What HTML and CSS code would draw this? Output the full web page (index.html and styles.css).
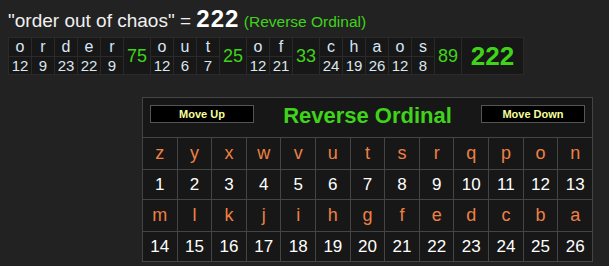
FILE: index.html
```html
<!DOCTYPE html>
<html lang="en">
<head>
  <meta charset="UTF-8">
  <title>Gematria - Reverse Ordinal</title>
  <link rel="stylesheet" href="styles.css">
</head>
<body>
  <div class="phrase">
    <span class="quote">"order out of chaos" = </span><span class="total">222</span>
    <span class="cipher-name">(Reverse Ordinal)</span>
  </div>

  <table class="breakdown">
    <tr>
      <td class="ch">o</td><td class="ch">r</td><td class="ch">d</td><td class="ch">e</td><td class="ch">r</td>
      <td class="word-sum" rowspan="2">75</td>
      <td class="ch">o</td><td class="ch">u</td><td class="ch">t</td>
      <td class="word-sum" rowspan="2">25</td>
      <td class="ch">o</td><td class="ch">f</td>
      <td class="word-sum" rowspan="2">33</td>
      <td class="ch">c</td><td class="ch">h</td><td class="ch">a</td><td class="ch">o</td><td class="ch">s</td>
      <td class="word-sum" rowspan="2">89</td>
      <td class="grand-sum" rowspan="2">222</td>
    </tr>
    <tr>
      <td class="val">12</td><td class="val">9</td><td class="val">23</td><td class="val">22</td><td class="val">9</td>
      <td class="val">12</td><td class="val">6</td><td class="val">7</td>
      <td class="val">12</td><td class="val">21</td>
      <td class="val">24</td><td class="val">19</td><td class="val">26</td><td class="val">12</td><td class="val">8</td>
    </tr>
  </table>

  <table class="chart">
    <tr>
      <th colspan="13">
        <div class="chart-head">
          <button class="move-btn">Move Up</button>
          <span class="chart-title">Reverse Ordinal</span>
          <button class="move-btn">Move Down</button>
        </div>
      </th>
    </tr>
    <tr class="letters">
      <td>z</td><td>y</td><td>x</td><td>w</td><td>v</td><td>u</td><td>t</td><td>s</td><td>r</td><td>q</td><td>p</td><td>o</td><td>n</td>
    </tr>
    <tr class="numbers">
      <td>1</td><td>2</td><td>3</td><td>4</td><td>5</td><td>6</td><td>7</td><td>8</td><td>9</td><td>10</td><td>11</td><td>12</td><td>13</td>
    </tr>
    <tr class="letters">
      <td>m</td><td>l</td><td>k</td><td>j</td><td>i</td><td>h</td><td>g</td><td>f</td><td>e</td><td>d</td><td>c</td><td>b</td><td>a</td>
    </tr>
    <tr class="numbers">
      <td>14</td><td>15</td><td>16</td><td>17</td><td>18</td><td>19</td><td>20</td><td>21</td><td>22</td><td>23</td><td>24</td><td>25</td><td>26</td>
    </tr>
  </table>
</body>
</html>
```

FILE: styles.css
```css
body {
  margin: 8px;
  background-color: #222;
  font-family: "Liberation Sans", Arial, sans-serif;
  color: #eee;
}

/* phrase line */
.phrase {
  height: 21px;
  line-height: 21px;
  white-space: nowrap;
}
.quote {
  font-size: 19px;
  color: #f0f0f0;
}
.total {
  font-size: 24px;
  font-weight: bold;
  letter-spacing: 1px;
  color: #fff;
}
.cipher-name {
  font-size: 15.5px;
  color: #3fd41a;
}

/* letter by letter breakdown */
.breakdown {
  margin-top: 8px;
  border-collapse: collapse;
  background: #171717;
}
.breakdown td {
  border: 1px solid #2a2a2a;
  text-align: center;
  padding: 0;
}
.breakdown .ch {
  width: 22px;
  height: 18px;
  font-size: 16px;
  color: #d6e6f7;
}
.breakdown .val {
  height: 17px;
  font-size: 15px;
  color: #dce6ef;
}
.word-sum {
  width: 26px;
  font-size: 18px;
  color: #3fd41a;
}
.grand-sum {
  width: 61px;
  font-size: 26px;
  font-weight: bold;
  color: #3fd41a;
}

/* cipher chart */
.chart {
  width: 451px;
  margin: 22px 0 0 134px;
  border-collapse: collapse;
  table-layout: fixed;
  background: #171717;
}
.chart th {
  border: 1px solid #444;
  height: 35px;
  padding: 0;
}
.chart-head {
  display: flex;
  align-items: center;
  justify-content: space-between;
  padding: 0 7px 8px 7px;
}
.move-btn {
  width: 104px;
  height: 18px;
  background: #000;
  border: 1px solid #555;
  color: #f6ff9a;
  font-family: "Liberation Sans", Arial, sans-serif;
  font-size: 11px;
  font-weight: bold;
  padding: 0;
}
.chart-title {
  font-size: 22px;
  font-weight: bold;
  color: #3fd41a;
  margin-top: 5px;
}
.chart td {
  border: 1px solid #444;
  padding: 0;
  text-align: center;
}
.letters td {
  height: 31px;
  color: #ee8144;
  font-size: 18px;
}
.numbers td {
  height: 29px;
  color: #fff;
  font-size: 17px;
}
```
